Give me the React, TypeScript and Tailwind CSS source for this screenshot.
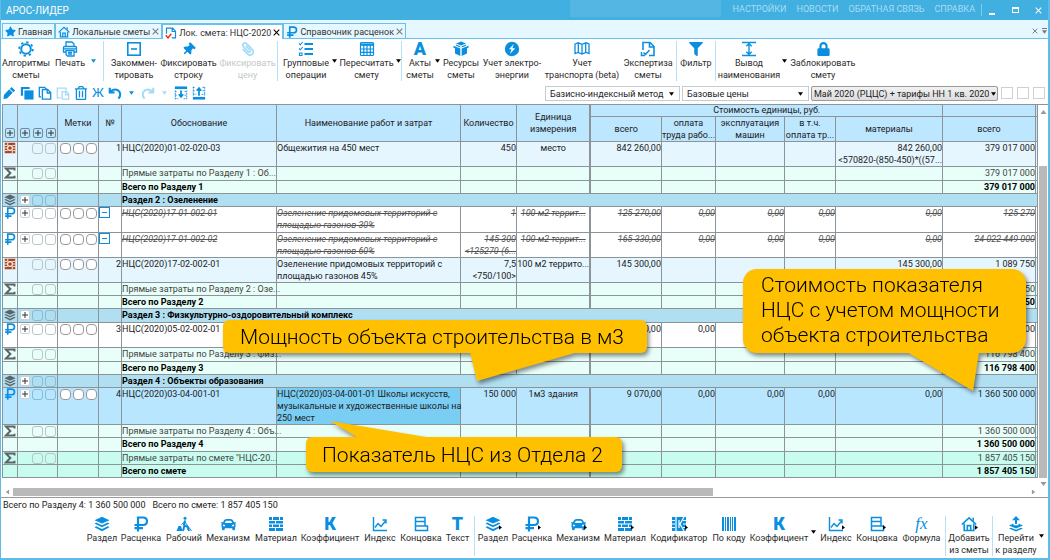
import React from 'react';
import { FaStar, FaThumbtack, FaPaperclip, FaFilter, FaLock, FaRegTrashAlt, FaCar } from 'react-icons/fa';

type IconName = keyof typeof shapes;

// 16x16 glyphs, drawn in currentColor
const shapes = {
  gear: (
    <g fill="none" stroke="currentColor">
      <circle cx="8" cy="8" r="4.8" strokeWidth="2" />
      <circle cx="8" cy="8" r="6.8" strokeWidth="1.8" strokeDasharray="2.4 2.94" />
    </g>
  ),
  printer: (
    <g fill="none" stroke="currentColor" strokeWidth="1.3">
      <path d="M4 5V1h6l2 2v2M4 11H1.5V6.5Q1.5 5.5 2.5 5.5h11q1 0 1 1V11H12M2 7.8h12" />
      <path d="M4 9.5h8V15H5.5L4 13.5zM6 11.3h4M6 13h4" />
    </g>
  ),
  ruble: (
    <path
      d="M5 15.500V1.500h5q4 0 4 3.700T10 9H1.500M1.500 12.200h8.500"
      fill="none"
      stroke="currentColor"
      strokeWidth="2.200"
    />
  ),
  comment: (
    <g fill="none" stroke="currentColor" strokeWidth="1.6">
      <rect x="1.8" y="1.8" width="12.4" height="12.4" />
      <path d="M5 8h6" />
    </g>
  ),
  list: (
    <g fill="none" stroke="currentColor" strokeWidth="1.5">
      <path d="M6.5 3H15M6.5 8H15M6.5 13H15" strokeWidth="2" />
      <path d="M1 2.5l1.3 1.3L4.8 1M1 7.5l1.3 1.3L4.8 6M1.5 12h2.5v2.5H1.5z" strokeWidth="1.1" />
    </g>
  ),
  grid: (
    <g fill="none" stroke="currentColor" strokeWidth="1.2">
      <rect x="1.5" y="1.5" width="13" height="13" rx="1" />
      <path d="M1.5 3.6h13" strokeWidth="2.4" />
      <path d="M1.5 8h13M1.5 11.3h13M4.8 4v10.5M8 4v10.5M11.3 4v10.5" />
    </g>
  ),
  boxes: (
    <g fill="currentColor">
      <path d="M8 .5l5 2-5 2-5-2z" />
      <path d="M.5 4.8L7.3 7.6V15L2 12.5V7.3L.5 6.8zM15.5 4.8L8.7 7.6V15L14 12.5V7.3l1.5-.5z" />
      <path d="M3 3.5l4.3 1.7v1.2L3 4.8zM13 3.5L8.7 5.2v1.2L13 4.8z" />
    </g>
  ),
  bolt: (
    <g>
      <circle cx="8" cy="8" r="7.2" fill="currentColor" />
      <path d="M9.8 3L5 8.2h2.5L6 13l5.2-5.8H8.4z" fill="white" />
    </g>
  ),
  map: (
    <path
      d="M1 3l3-1.2L8 3.4l4-1.6 3 1.2v9.5l-3-1-4 1.6-4-1.6-3 1zM4.3 2v9.3M8 3.5v9.3M11.7 2v9.3"
      fill="none"
      stroke="currentColor"
      strokeWidth="1.3"
    />
  ),
  expert: (
    <g fill="none" stroke="currentColor" strokeWidth="1.6">
      <path d="M3 9V1.5h7l4 4v9H9M9.5 1.5V6H14" />
      <path d="M1.5 11v3.5H5M3.5 11.5l2 2L9.5 9" strokeWidth="1.5" />
    </g>
  ),
  estimate: (
    <g fill="none" stroke="currentColor" strokeWidth="1.6">
      <path d="M2 9V1.5h8l4 4v9H9M9.5 1.5V6H14" />
      <path d="M1 11l3 3.5L8.5 9" stroke="#e5322d" strokeWidth="2" />
    </g>
  ),
  height: (
    <g fill="none" stroke="currentColor" strokeWidth="1.4">
      <path d="M1 1.5h14M1 14.5h14" />
      <path d="M8 3v10M5.3 5.3L8 2.6l2.7 2.7M5.3 10.7L8 13.4l2.7-2.7" />
    </g>
  ),
  home: (
    <g fill="none" stroke="currentColor" strokeWidth="1.6">
      <path d="M.8 8.5L8 1.8l7.2 6.7" />
      <path d="M3.2 7.5v7h9.6v-7M12.2 5V1.8M6.3 14V9.6h3.4V14" />
    </g>
  ),
  pencil: (
    <path d="M11 1l4 4-2 2-4-4zM8.200 3.800l4 4-6.500 6.500-4 .500.500-4.500zM7 15.500h3" fill="currentColor" />
  ),
  copy: (
    <g fill="currentColor">
      <path d="M1 1h10v2.5H3.5V11H1z" />
      <path d="M5 5h10.5v10.5H5z" />
    </g>
  ),
  docs: (
    <g fill="none" stroke="currentColor" strokeWidth="1.5">
      <path d="M5 4h6l3.5 3.5V15H5zM10.5 4v4h4" />
      <path d="M3.5 12.5H1.5V1.5h6L9.5 3.5" />
    </g>
  ),
  paste: (
    <g fill="none" stroke="currentColor" strokeWidth="1.5">
      <path d="M5.5 13.5h-4v-11h10v3M4 2.5h5" />
      <path d="M7 6.5h5l2.5 2.5v6H7zM11 6.5V10h3.5" />
    </g>
  ),
  undo: <path d="M2 2v5.500h5.500M2.500 7C4.500 4 8.500 3.200 11.500 5c3 2 3.400 6 .5 9.500" fill="none" stroke="currentColor" strokeWidth="2.400" />,
  redo: <path d="M14 2v5.500H8.500M13.500 7C11.500 4 7.500 3.200 4.500 5c-3 2-3.400 6-.5 9.500" fill="none" stroke="currentColor" strokeWidth="2.400" />,
  insertBelow: (
    <g fill="none" stroke="currentColor">
      <path d="M1 2h14" strokeWidth="3" />
      <path d="M1 6.500h3M12 6.500h3M1 10.500h3M12 10.500h3M1 14.500h4M11 14.500h4M1.500 5v10M14.500 5v10" strokeDasharray="2 1" />
      <path d="M8 5v7M5.500 9.500L8 12.500l2.500-3" strokeWidth="2" />
    </g>
  ),
  insertAbove: (
    <g fill="none" stroke="currentColor">
      <path d="M1 14h14" strokeWidth="3" />
      <path d="M1 1.500h3M12 1.500h3M1 5.500h3M12 5.500h3M1 9.500h4M11 9.500h4M1.500 1v10M14.500 1v10" strokeDasharray="2 1" />
      <path d="M8 11V3M5.500 5.500L8 2.500l2.500 3" strokeWidth="2" />
    </g>
  ),
  layers: (
    <g fill="currentColor">
      <path d="M8 .8l7.500 3.400L8 7.600.5 4.200z" />
      <path d="M2.200 6.500L8 9.200l5.800-2.700 1.700 1L8 11.200.5 7.500z" />
      <path d="M2.200 10.300L8 13l5.800-2.700 1.700 1L8 15.200.5 11.300z" />
    </g>
  ),
  worker: (
    <g fill="none" stroke="currentColor" strokeWidth="1.500">
      <circle cx="9" cy="2.300" r="1.500" fill="currentColor" stroke="none" />
      <path d="M9 4.500L8 9l3.500 2 1.500 4M8.500 9.500L7 15" strokeWidth="2" />
      <path d="M9.500 5L5.500 8.500M9 6l6.500 9" strokeWidth="1" />
      <path d="M.5 15l2-5h2.500l1.500 5z" fill="currentColor" stroke="none" />
    </g>
  ),
  bricks: (
    <path
      d="M1 1h3v3H1zM5 1h6v3H5zM12 1h3v3h-3zM1 5h6v2.500H1zM8 5h7v2.500H8zM1 8.500h3V11H1zM5 8.500h6V11H5zM12 8.500h3V11h-3zM1 12h6v3H1zM8 12h7v3H8z"
      fill="currentColor"
    />
  ),
  codes: (
    <g>
      <path d="M1 1h14v14H1z" fill="currentColor" />
      <path d="M1 4.500h3M1 8h3M1 11.500h3M12 4.500h3M12 8h3M12 11.500h3M5 1v14M8 4v8M13 1L9 8l4 7" fill="none" stroke="white" strokeWidth="1.200" />
    </g>
  ),
  chart: (
    <g fill="none" stroke="currentColor" strokeWidth="1.400">
      <path d="M1.500 1v13.500H15" />
      <path d="M3 11.500l3-4 3 3 5-6M10.500 4H14v3.500" />
    </g>
  ),
  ending: (
    <g fill="none" stroke="currentColor" strokeWidth="1.500">
      <path d="M2.500 1.500h9.500v4H2.500zM2.500 5.500h9.500v4.500H2.500zM2.500 10h12v4.500h-12z" />
    </g>
  ),
  barcode: (
    <path
      d="M1 1h2v14H1zM4 1h1v14H4zM6 1h2v14H6zM9 1h1v14H9zM11 1h1v14h-1zM13 1h2v14h-2z"
      fill="currentColor"
    />
  ),
  goto: (
    <g fill="currentColor">
      <path d="M8 0l4 4.200H9V8H7V4.200H4z" />
      <path d="M1 9.500l4.500-2v1.700h5V7.500l4.500 2-7 3z" />
      <path d="M1 12.500l7 3 7-3-2-.800-5 2-5-2z" />
    </g>
  ),
  ncs: (
    <g>
      <path d="M1 1h14v14H1z" fill="currentColor" />
      <path d="M1 4.500h4M1 8h3M1 11.500h4M11 4.500h4M12 8h3M11 11.500h4M5 1v3M11 12v3" stroke="white" strokeWidth="1.200" />
      <circle cx="8" cy="8" r="3.200" fill="none" stroke="white" strokeWidth="1.500" />
    </g>
  ),
  sigma: (
    <path d="M14 4.500V2H2.500L8.500 8 2.500 14H14v-2.500" fill="none" stroke="currentColor" strokeWidth="2.600" />
  ),
};

const Icon: React.FC<{ name: IconName; className?: string }> = ({ name, className = 'size-4' }) => (
  <svg viewBox="0 0 16 16" className={`shrink-0 ${className}`} aria-hidden="true">
    {shapes[name]}
  </svg>
);

const Caret: React.FC<{ className?: string }> = ({ className = 'text-black' }) => (
  <svg viewBox="0 0 6 4" className={`w-[5px] h-[4px] shrink-0 ${className}`} aria-hidden="true">
    <path d="M0 0h6L3 4z" fill="currentColor" />
  </svg>
);

interface ToolProps {
  label: string;
  width: string;
  icon: React.ReactNode;
  menu?: boolean;
  disabled?: boolean;
}

const Tool: React.FC<ToolProps> = ({ label, width, icon, menu, disabled }) => (
  <button
    disabled={disabled}
    className={`flex flex-col items-center shrink-0 pt-0.5 ${width} ${disabled ? 'text-[#c3c8cc]' : 'text-[#2b2b2b]'}`}
  >
    <span className={`relative h-4 flex items-center justify-center ${disabled ? 'text-[#a6dcf8]' : 'text-[#0a8fe0]'}`}>
      {icon}
      {menu && (
        <svg viewBox="0 0 4 6" className="absolute -right-px bottom-0.5 w-[3px] h-[5px] text-black" aria-hidden="true">
          <path d="M0 0l4 3-4 3z" fill="currentColor" />
        </svg>
      )}
    </span>
    <span className="whitespace-pre text-center leading-3">{label}</span>
  </button>
);

const Divider: React.FC<{ className?: string }> = ({ className = '' }) => (
  <div className={`w-px h-10 mt-0.5 shrink-0 bg-[#b5e2f8] ${className}`} />
);

const MenuArrow: React.FC<{ name: string; className?: string; caret?: string }> = ({ name, className = '', caret }) => (
  <button aria-label={name} className={`self-start pt-5 shrink-0 ${className}`}>
    <Caret className={caret} />
  </button>
);

const Letter: React.FC<{ children: string }> = ({ children }) => (
  <span className="font-black text-[18px] leading-4">{children}</span>
);

const Cross: React.FC<{ className?: string }> = ({ className = 'size-[7px]' }) => (
  <svg viewBox="0 0 8 8" className={className} aria-hidden="true">
    <path d="M.8.8l6.400 6.400M7.200.8L.8 7.200" stroke="currentColor" strokeWidth="1.200" />
  </svg>
);

const Tab: React.FC<{ label: string; icon: React.ReactNode; active?: boolean; closable?: boolean }> = ({
  label,
  icon,
  active,
  closable = true,
}) => (
  <div
    className={`flex items-center gap-0.5 px-0.5 pt-px border border-b-0 border-[#6cc1ea] text-[#333] ${
      active ? 'bg-white border-t-2 -mb-px' : 'bg-[#e5f7ff]'
    }`}
  >
    <span className="text-[#0a8fe0]">{icon}</span>
    <button role="tab" aria-selected={!!active} className="whitespace-nowrap leading-3">
      {label}
    </button>
    {closable && (
      <button aria-label={`Закрыть: ${label}`} className={active ? 'text-black' : 'text-[#777]'}>
        <Cross />
      </button>
    )}
  </div>
);

const Plus: React.FC<{ name: string; className?: string }> = ({ name, className = 'bg-white border-[#c9d3d8]' }) => (
  <button
    aria-label={name}
    className={`size-[10px] shrink-0 rounded-[2px] border flex items-center justify-center text-[#333] ${className}`}
  >
    <svg viewBox="0 0 6 6" className="size-[6px]" aria-hidden="true">
      <path d="M3 0v6M0 3h6" stroke="currentColor" />
    </svg>
  </button>
);

const Tick: React.FC<{ name: string; className: string }> = ({ name, className }) => (
  <input type="checkbox" aria-label={name} className={`appearance-none shrink-0 border ${className}`} />
);

interface Row {
  kind: 'item' | 'work' | 'off' | 'sum' | 'total' | 'section' | 'grandSum' | 'grandTotal' | 'selected';
  height: string;
  no?: string;
  code: string;
  name?: string;
  qty?: string;
  unit?: string;
  costs?: string[];
  total?: string;
}

const rows: Row[] = [
  { kind: 'item', height: 'h-[25px]', no: '1', code: 'НЦС(2020)01-02-020-03', name: 'Общежития на 450 мест', qty: '450', unit: 'место', costs: ['842 260,00', '', '', '', '842 260,00\n<570820-(850-450)*((57...'], total: '379 017 000' },
  { kind: 'sum', height: 'h-[14px]', code: 'Прямые затраты по Разделу 1 : Об...', total: '379 017 000' },
  { kind: 'total', height: 'h-[13px]', code: 'Всего по Разделу 1', total: '379 017 000' },
  { kind: 'section', height: 'h-[13px]', code: 'Раздел 2 : Озеленение' },
  { kind: 'off', height: 'h-[26px]', code: 'НЦС(2020)17-01-002-01', name: 'Озеленение придомовых территорий с\nплощадью газонов 30%', qty: '1', unit: '100 м2 террит...', costs: ['125 270,00', '0,00', '0,00', '0,00', '0,00'], total: '125 270' },
  { kind: 'off', height: 'h-[25px]', code: 'НЦС(2020)17-01-002-02', name: 'Озеленение придомовых территорий с\nплощадью газонов 60%', qty: '145 300\n<125270-(6...', unit: '100 м2 террит...', costs: ['165 330,00', '0,00', '0,00', '0,00', '0,00'], total: '24 022 449 000' },
  { kind: 'item', height: 'h-[25px]', no: '2', code: 'НЦС(2020)17-02-002-01', name: 'Озеленение придомовых территорий с\nплощадью газонов 45%', qty: '7,5\n<750/100>', unit: '100 м2 террито...', costs: ['145 300,00', '', '', '', '145 300,00'], total: '1 089 750' },
  { kind: 'sum', height: 'h-[13px]', code: 'Прямые затраты по Разделу 2 : Озе...', total: '1 089 750' },
  { kind: 'total', height: 'h-[13px]', code: 'Всего по Разделу 2', total: '1 089 750' },
  { kind: 'section', height: 'h-[14px]', code: 'Раздел 3 : Физкультурно-оздоровительный комплекс' },
  { kind: 'work', height: 'h-[25px]', no: '3', code: 'НЦС(2020)05-02-002-01', costs: ['0,00', '0,00', '', '', ''], total: '116 798 400' },
  { kind: 'sum', height: 'h-[14px]', code: 'Прямые затраты по Разделу 3 : Физ...', total: '116 798 400' },
  { kind: 'total', height: 'h-[13px]', code: 'Всего по Разделу 3', total: '116 798 400' },
  { kind: 'section', height: 'h-[13px]', code: 'Раздел 4 : Объекты образования' },
  { kind: 'selected', height: 'h-[37px]', no: '4', code: 'НЦС(2020)03-04-001-01', name: 'НЦС(2020)03-04-001-01 Школы искусств,\nмузыкальные и художественные школы на\n250 мест', qty: '150 000', unit: '1м3 здания', costs: ['9 070,00', '0,00', '0,00', '0,00', '0,00'], total: '1 360 500 000' },
  { kind: 'sum', height: 'h-[13px]', code: 'Прямые затраты по Разделу 4 : Объ...', total: '1 360 500 000' },
  { kind: 'total', height: 'h-[14px]', code: 'Всего по Разделу 4', total: '1 360 500 000' },
  { kind: 'grandSum', height: 'h-[13px]', code: 'Прямые затраты по смете "НЦС-20...', total: '1 857 405 150' },
  { kind: 'grandTotal', height: 'h-[13px]', code: 'Всего по смете', total: '1 857 405 150' },
];

const rowStyle: Record<Row['kind'], string> = {
  item: 'bg-[#e5f6ff]',
  work: 'bg-white',
  off: 'bg-white italic line-through text-[#555]',
  sum: 'bg-[#e8fef8] text-[#444]',
  total: 'bg-[#e8fef8] font-bold text-black',
  section: 'bg-[#b0dff2] font-bold text-black',
  grandSum: 'bg-[#c8fcee] text-[#444]',
  grandTotal: 'bg-[#c8fcee] font-bold text-black',
  selected: 'bg-[#b8e6ff]',
};

const RowIcon: React.FC<{ kind: Row['kind'] }> = ({ kind }) => {
  if (kind === 'item') return <Icon name="ncs" className="size-3 text-[#a9441c]" />;
  if (kind === 'section') return <Icon name="layers" className="size-3 text-[#5c6468]" />;
  if (kind === 'sum' || kind === 'grandSum') return <Icon name="sigma" className="size-3 text-[#5c6468]" />;
  if (kind === 'total' || kind === 'grandTotal') return null;
  return <Icon name="ruble" className="size-3 text-[#0a8fe0]" />;
};

const cell = 'border border-[#8d9499] p-0 align-top';

const EstimateRow: React.FC<{ row: Row }> = ({ row }) => {
  const isLine = ['item', 'work', 'off', 'selected'].includes(row.kind);
  const hasTotalsOnly = row.kind === 'total' || row.kind === 'grandTotal';
  const expandable = ['work', 'off', 'selected', 'section'].includes(row.kind);
  const tickBorder = row.kind === 'section' || row.kind === 'selected' ? 'border-[#86bcd4]' : 'border-[#b9c6c8]';

  return (
    <tr className={`${row.height} ${rowStyle[row.kind]}`}>
      <td className={cell}>
        <div className="h-3 flex justify-center">
          <RowIcon kind={row.kind} />
        </div>
      </td>
      <td className={cell}>
        {!hasTotalsOnly && (
          <div className="h-3 flex items-center justify-end gap-0.5 pr-px">
            {expandable && <Plus name={`Развернуть: ${row.code}`} />}
            <Tick name={`Отметка 1: ${row.code}`} className={`size-[11px] rounded-[3px] ${tickBorder}`} />
            <Tick name={`Отметка 2: ${row.code}`} className={`size-[11px] rounded-[3px] ${tickBorder}`} />
          </div>
        )}
      </td>
      <td className={cell}>
        {isLine && (
          <div className="h-3 flex items-center justify-center gap-0.5">
            {[1, 2, 3].map((n) => (
              <Tick key={n} name={`Метка ${n}: ${row.code}`} className="size-[11px] rounded-[4px] bg-white border-[#999]" />
            ))}
          </div>
        )}
      </td>
      <td className={`${cell} text-right`}>
        {row.kind === 'off' ? (
          <button
            aria-label={`Раскомментировать: ${row.code}`}
            className="size-[11px] border border-[#0a8fe0] bg-white flex items-center justify-center"
          >
            <span className="w-[5px] h-px bg-[#0a8fe0]" />
          </button>
        ) : (
          row.no
        )}
      </td>
      {row.kind === 'section' ? (
        <td colSpan={11} className={cell}>
          {row.code}
        </td>
      ) : (
        <>
          <td className={cell}>{row.code}</td>
          <td className={`${cell} ${row.kind === 'selected' ? 'bg-[#7acdf3]' : ''}`}>{row.name}</td>
          <td className={`${cell} text-right`}>{row.qty}</td>
          <td className={`${cell} border-r-2 text-center`}>{row.unit}</td>
          {[0, 1, 2, 3, 4].map((i) => (
            <td key={i} className={`${cell} text-right`}>
              {row.costs?.[i]}
            </td>
          ))}
          <td className={`${cell} text-right`}>{row.total}</td>
          <td className={cell} />
        </>
      )}
    </tr>
  );
};

const head = 'border border-[#8d9499] p-0 font-normal text-center';

const EstimateTable = () => (
  <table className="table-fixed w-full border-collapse whitespace-pre leading-3 text-[#222]">
    <colgroup>
      <col className="w-[15px]" />
      <col className="w-[40px]" />
      <col className="w-[41px]" />
      <col className="w-[23px]" />
      <col className="w-[155px]" />
      <col />
      <col className="w-[56px]" />
      <col className="w-[74px]" />
      <col className="w-[71px]" />
      <col className="w-[54px]" />
      <col className="w-[69px]" />
      <col className="w-[51px]" />
      <col className="w-[107px]" />
      <col className="w-[93px]" />
      <col className="w-[2px]" />
    </colgroup>
    <thead className="bg-[#bde6ff]">
      <tr className="h-3">
        <th rowSpan={2} className="border border-[#8d9499] p-0 pb-[3px] align-bottom">
          <div className="flex justify-center">
            <Plus name="Развернуть все" className="border-[#6f8b99]" />
          </div>
        </th>
        <th rowSpan={2} className="border border-[#8d9499] p-0 pb-[3px] align-bottom">
          <div className="flex justify-center gap-[3px]">
            <Plus name="Уровень 1" className="border-[#6f8b99]" />
            <Plus name="Уровень 2" className="border-[#6f8b99]" />
            <Plus name="Уровень 3" className="border-[#6f8b99]" />
          </div>
        </th>
        <th rowSpan={2} className={head}>Метки</th>
        <th rowSpan={2} className={head}>№</th>
        <th rowSpan={2} className={head}>Обоснование</th>
        <th rowSpan={2} className={head}>Наименование работ и затрат</th>
        <th rowSpan={2} className={head}>Количество</th>
        <th rowSpan={2} className={`${head} border-r-2`}>{'Единица\nизмерения'}</th>
        <th colSpan={5} className={`${head} leading-[11px]`}>Стоимость единицы, руб.</th>
        <th className={head} />
        <th className={head} />
      </tr>
      <tr className="h-[25px]">
        <th className={head}>всего</th>
        <th className={head}>{'оплата\nтруда рабо...'}</th>
        <th className={head}>{'эксплуатация\nмашин'}</th>
        <th className={head}>{'в т.ч.\nоплата тр...'}</th>
        <th className={head}>материалы</th>
        <th className={head}>всего</th>
        <th className={head} />
      </tr>
    </thead>
    <tbody>
      {rows.map((row, i) => (
        <EstimateRow key={i} row={row} />
      ))}
    </tbody>
  </table>
);

const PickList: React.FC<{ name: string; value: string; className: string; padding?: string; caret?: string }> = ({
  name,
  value,
  className,
  padding = 'pl-1 pr-3',
  caret = 'right-1.5',
}) => (
  <div className={`relative h-[15px] ${className}`}>
    <select
      aria-label={name}
      className={`appearance-none w-full h-full ${padding} border border-inherit rounded-[inherit] text-[#222] leading-3`}
    >
      <option>{value}</option>
    </select>
    <Caret className={`absolute top-1.5 text-black pointer-events-none ${caret}`} />
  </div>
);

const Callout: React.FC<{ className: string; tail: React.ReactNode; children: string }> = ({ className, tail, children }) => (
  <div
    className={`absolute bg-[#ffc000] text-black whitespace-pre font-light text-[21px] drop-shadow-[2px_3px_2px_rgba(0,0,0,0.45)] ${className}`}
  >
    {children}
    {tail}
  </div>
);

const App: React.FC = () => (
  <div className="relative w-full h-screen flex flex-col overflow-hidden bg-white border-l border-r-2 border-b-2 border-[#5fbbe8] font-[Roboto,'Noto_Sans',sans-serif] text-[9px]">
    <header className="h-5 shrink-0 flex items-center bg-[#41afe0] pl-[5px] text-[#abddf3]">
      <h1 className="text-[10px] text-white">АРОС-ЛИДЕР</h1>
      <div className="ml-auto w-[151px] h-[17px] self-start bg-white/10" />
      <nav className="flex gap-2.5 pl-3">
        <a href="#settings">НАСТРОЙКИ</a>
        <a href="#news">НОВОСТИ</a>
        <a href="#feedback">ОБРАТНАЯ СВЯЗЬ</a>
        <a href="#help">СПРАВКА</a>
      </nav>
      <div className="w-px h-3 ml-1.5 bg-[#7fcbeb]" />
      <button aria-label="Свернуть" className="w-5 h-3 flex items-end justify-center pb-px">
        <span className="w-[6px] h-[2px] bg-white" />
      </button>
      <button aria-label="Развернуть" className="w-[26px] h-3 flex items-center justify-center">
        <span className="w-[7px] h-[6px] border border-t-2 border-white" />
      </button>
      <button aria-label="Закрыть" className="w-5 h-3 flex items-center justify-center text-white">
        <Cross />
      </button>
    </header>

    <div role="tablist" className="h-[19px] shrink-0 flex pt-[3px] pl-px bg-[#e5f7ff] border-b border-[#6cc1ea]">
      <Tab label="Главная" icon={<FaStar className="size-[11px]" />} closable={false} />
      <Tab label="Локальные сметы" icon={<Icon name="home" className="size-3" />} />
      <Tab label="Лок. смета: НЦС-2020" icon={<Icon name="estimate" className="size-3" />} active />
      <Tab label="Справочник расценок" icon={<Icon name="ruble" className="size-3" />} />
      <div className="ml-auto flex items-center gap-1 pr-px text-[#777]">
        <button aria-label="Закрыть вкладку">
          <Cross className="size-[6px]" />
        </button>
        <button aria-label="Список вкладок" className="flex flex-col items-center gap-px">
          <span className="w-[5px] h-px bg-[#777]" />
          <Caret className="text-[#777]" />
        </button>
      </div>
    </div>

    <div className="h-[44px] shrink-0 flex">
      <Tool label={'Алгоритмы\nсметы'} width="w-[50px]" icon={<Icon name="gear" />} />
      <Tool label="Печать" width="w-[38px]" icon={<Icon name="printer" />} />
      <MenuArrow name="Варианты печати" className="ml-0.5" caret="text-[#0a8fe0]" />
      <Divider className="mx-[7px]" />
      <Tool label={'Закоммен-\nтировать'} width="w-[46px]" icon={<Icon name="comment" />} />
      <Tool label={'Фиксировать\nстроку'} width="w-[63px]" icon={<FaThumbtack className="size-[13px] rotate-45" />} />
      <Tool label={'Фиксировать\nцену'} width="w-[55px]" icon={<FaPaperclip className="size-[14px] -scale-x-100" />} disabled />
      <Divider className="ml-0.5 mr-[6px]" />
      <Tool label={'Групповые\nоперации'} width="w-[44px]" icon={<Icon name="list" />} />
      <MenuArrow name="Выбрать операцию" className="ml-1" />
      <Tool label={'Пересчитать\nсмету'} width="w-[59px]" icon={<Icon name="grid" />} />
      <MenuArrow name="Варианты пересчета" />
      <Divider className="mr-[3px]" />
      <Tool label={'Акты\nсметы'} width="w-[30px]" icon={<Letter>А</Letter>} />
      <MenuArrow name="Виды актов" />
      <Tool label={'Ресурсы\nсметы'} width="w-[42px]" icon={<Icon name="boxes" />} />
      <Tool label={'Учет электро-\nэнергии'} width="w-[60px]" icon={<Icon name="bolt" />} />
      <Tool label={'Учет\nтранспорта (beta)'} width="w-[80px]" icon={<Icon name="map" />} />
      <Tool label={'Экспертиза\nсметы'} width="w-[52px]" icon={<Icon name="expert" />} />
      <Divider className="ml-0.5" />
      <Tool label="Фильтр" width="w-[38px]" icon={<FaFilter className="size-[14px]" />} />
      <Divider />
      <Tool label={'Вывод\nнаименования'} width="w-[66px]" icon={<Icon name="height" />} />
      <MenuArrow name="Режим вывода" />
      <Tool label={'Заблокировать\nсмету'} width="w-[72px]" icon={<FaLock className="w-[15px] h-[14px]" />} />
    </div>

    <div className="h-[21px] shrink-0 flex items-start pt-0.5 pl-px pr-[3px] text-[#0a8fe0]">
      <div className="flex items-center gap-1 h-4">
        <button aria-label="Редактировать"><Icon name="pencil" className="size-[14px]" /></button>
        <button aria-label="Копировать"><Icon name="copy" className="size-[14px]" /></button>
        <button aria-label="Дублировать"><Icon name="docs" className="size-[14px]" /></button>
        <button aria-label="Вставить" disabled className="text-[#a6dcf8]"><Icon name="paste" className="size-[14px]" /></button>
        <button aria-label="Удалить"><FaRegTrashAlt className="size-[14px]" /></button>
        <button className="w-3 text-[13px] leading-4 text-center">Ж</button>
        <button aria-label="Отменить"><Icon name="undo" className="size-[14px]" /></button>
        <button aria-label="История отмены" className="px-[3px]"><Caret className="text-[#0a8fe0]" /></button>
        <button aria-label="Повторить" disabled className="text-[#a6dcf8]"><Icon name="redo" className="size-[14px]" /></button>
        <button aria-label="История повтора" disabled className="px-[3px]"><Caret className="text-[#a6dcf8]" /></button>
        <button aria-label="Вставить ниже"><Icon name="insertBelow" className="size-[14px]" /></button>
        <button aria-label="Вставить выше"><Icon name="insertAbove" className="size-[14px]" /></button>
      </div>
      <div className="ml-auto flex gap-0.5 pt-px">
        <PickList name="Метод расчета" value="Базисно-индексный метод" className="w-[135px] border-[#c4ccd1]" />
        <PickList name="Вид цен" value="Базовые цены" className="w-[127px] border-[#c4ccd1]" />
        <PickList
          name="Индексы"
          value="Май 2020 (РЦЦС) + тарифы НН 1 кв. 2020"
          className="w-[187px] border-[#9a9a9a] rounded-[2px] bg-linear-to-b from-[#f3f3f3] to-[#dcdcdc]"
          padding="pl-0.5 pr-0"
          caret="right-0.5"
        />
        <div className="flex gap-1 pl-px pt-px">
          <Tick name="Параметр 1" className="size-3 border-[#d0d0d0]" />
          <Tick name="Параметр 2" className="size-3 border-[#d0d0d0]" />
          <Tick name="Параметр 3" className="size-3 border-[#d0d0d0]" />
        </div>
      </div>
    </div>

    <main className="relative flex-1 min-h-0 flex flex-col border-b border-[#9a9a9a]">
      <div className="flex-1 min-h-0 flex pl-px">
        <div className="flex-1 min-w-0">
          <EstimateTable />
        </div>
        <div className="w-[10px] flex flex-col items-center pt-[5px] pb-px border-t border-[#8d9499] bg-white">
          <Caret className="rotate-180 w-[7px] text-[#999]" />
          <div className="w-2 flex-1 mt-[52px] mb-1 bg-[#b9b9b9]" />
          <Caret className="w-[7px] text-[#999]" />
        </div>
      </div>
      <div className="h-[10px] shrink-0 flex items-center pl-1 pr-3">
        <Caret className="rotate-90 text-[#999]" />
        <div className="flex-1 mx-[3px]">
          <div className="w-[69%] h-[8px] bg-[#b9b9b9]" />
        </div>
        <Caret className="-rotate-90 text-[#999]" />
      </div>

      <Callout
        className="left-[222px] top-[216px] w-[424px] h-[33px] rounded-[6px] pl-[17px] leading-[34px]"
        tail={
          <svg viewBox="0 0 108 30" className="absolute left-[247px] top-[32px] w-[108px] h-[30px]" aria-hidden="true">
            <path d="M0 0h108L7 29z" fill="#ffc000" />
          </svg>
        }
      >
        Мощность объекта строительства в м3
      </Callout>
      <Callout
        className="left-[305px] top-[333px] w-[316px] h-[35px] rounded-[6px] pl-[16px] leading-[36px]"
        tail={
          <svg viewBox="0 0 108 18" className="absolute left-[24px] -top-[16px] w-[108px] h-[18px]" aria-hidden="true">
            <path d="M0 0l108 18H30z" fill="#ffc000" />
          </svg>
        }
      >
        Показатель НЦС из Отдела 2
      </Callout>
      <Callout
        className="left-[742px] top-[165px] w-[283px] h-[84px] rounded-[14px] pl-[18px] pt-1 leading-[25px]"
        tail={
          <svg viewBox="0 0 72 40" className="absolute left-[164px] top-[83px] w-[72px] h-[40px]" aria-hidden="true">
            <path d="M0 0h72l-6 39z" fill="#ffc000" />
          </svg>
        }
      >
        {'Стоимость показателя\nНЦС с учетом мощности\nобъекта строительства'}
      </Callout>
    </main>

    <div className="h-4 shrink-0 flex items-center gap-[7px] pl-0.5 text-[#222]">
      <span>Всего по Разделу 4: 1 360 500 000</span>
      <span>Всего по смете: 1 857 405 150</span>
    </div>

    <footer className="h-[44px] shrink-0 flex justify-end pr-1">
      <Tool label="Раздел" width="w-[34px]" icon={<Icon name="layers" />} />
      <Tool label="Расценка" width="w-[44px]" icon={<Icon name="ruble" />} />
      <Tool label="Рабочий" width="w-[42px]" icon={<Icon name="worker" />} />
      <Tool label="Механизм" width="w-[46px]" icon={<FaCar className="size-[15px]" />} />
      <Tool label="Материал" width="w-[50px]" icon={<Icon name="bricks" />} />
      <Tool label="Коэффициент" width="w-[58px]" icon={<Letter>К</Letter>} />
      <Tool label="Индекс" width="w-[42px]" icon={<Icon name="chart" />} />
      <Tool label="Концовка" width="w-[40px]" icon={<Icon name="ending" />} />
      <Tool label="Текст" width="w-[33px]" icon={<Letter>Т</Letter>} />
      <Divider />
      <Tool label="Раздел" width="w-[36px]" icon={<Icon name="layers" />} menu />
      <Tool label="Расценка" width="w-[42px]" icon={<Icon name="ruble" />} menu />
      <Tool label="Механизм" width="w-[50px]" icon={<FaCar className="size-[15px]" />} menu />
      <Tool label="Материал" width="w-[44px]" icon={<Icon name="bricks" />} menu />
      <Tool label="Кодификатор" width="w-[64px]" icon={<Icon name="codes" />} menu />
      <Tool label="По коду" width="w-[36px]" icon={<Icon name="barcode" />} />
      <Tool label="Коэффициент" width="w-[64px]" icon={<Letter>К</Letter>} />
      <MenuArrow name="Виды коэффициентов" className="-mt-1" />
      <Tool label="Индекс" width="w-[40px]" icon={<Icon name="chart" />} menu />
      <Tool label="Концовка" width="w-[42px]" icon={<Icon name="ending" />} menu />
      <Tool
        label="Формула"
        width="w-[47px]"
        icon={<span className="font-['Liberation_Serif',serif] italic text-[17px] leading-4">fx</span>}
      />
      <Divider />
      <Tool label={'Добавить\nиз сметы'} width="w-[46px]" icon={<Icon name="home" />} menu />
      <Divider />
      <Tool label={'Перейти\nк разделу'} width="w-[46px]" icon={<Icon name="goto" />} />
      <MenuArrow name="Выбрать раздел" />
    </footer>
  </div>
);

export default App;
